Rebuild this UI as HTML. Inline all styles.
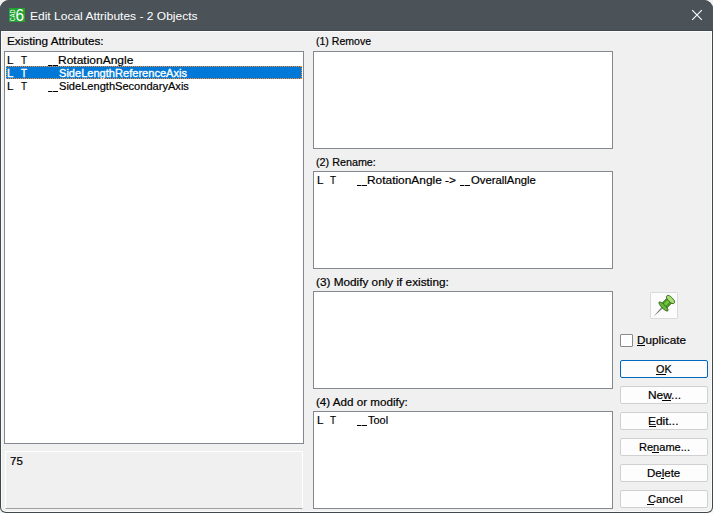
<!DOCTYPE html>
<html><head><meta charset="utf-8">
<style>
html,body{margin:0;padding:0;}
body{width:713px;height:513px;position:relative;overflow:hidden;background:#f2f2f2;font-family:"Liberation Sans",sans-serif;font-size:12px;color:#000;}
.t{position:absolute;white-space:pre;line-height:13px;font-size:11.5px;transform-origin:0 0;}
.r{position:absolute;box-sizing:border-box;}
</style></head><body>
<div class="r" style="left:0px;top:0px;width:713px;height:513px;background:#3f484d;border-radius:9px 9px 6px 6px;"></div>
<div class="r" style="left:1px;top:1px;width:711px;height:511px;background:#fbfbfb;border-radius:8px 8px 5px 5px;"></div>
<div class="r" style="left:0px;top:0px;width:713px;height:30px;background:#4b5359;border-radius:9px 9px 0 0;"></div>
<div class="r" style="left:0px;top:30px;width:713px;height:1px;background:#40494e;"></div>
<div class="r" style="left:2px;top:32px;width:709px;height:479px;background:#f0f0f0;border-radius:0 0 4px 4px;"></div>
<div class="r" style="left:9px;top:8px;width:16px;height:14px;background:#1fa32e;"></div>
<svg class="r" style="left:9px;top:8px" width="16" height="14" viewBox="0 0 16 14"><text x="0" y="0" transform="translate(5.9,13.2) rotate(-90)" font-family="Liberation Sans" font-size="6.6" textLength="11.6" lengthAdjust="spacingAndGlyphs" fill="#fff">CAD</text><text x="0" y="0" transform="translate(6.4,13.1) scale(0.9,1)" font-family="Liberation Sans" font-size="17" fill="#fff">6</text></svg>
<div class="t" style="left:29.96px;top:10px;color:#ffffff;transform:scaleX(1.0440);">Edit Local Attributes - 2 Objects</div>
<svg class="r" style="left:691px;top:9px" width="13" height="13" viewBox="0 0 13 13"><path d="M1.2 1.2L10.8 10.8M10.8 1.2L1.2 10.8" stroke="#fff" stroke-width="1.1"/></svg>
<div class="t" style="left:6.98px;top:35px;-webkit-text-stroke:0.2px currentColor;transform:scaleX(1.0215);">Existing Attributes:</div>
<div class="r" style="left:4px;top:51px;width:300px;height:393px;background:#fff;border:1px solid #828790;"></div>
<div class="t" style="left:7.00px;top:54px;-webkit-text-stroke:0.2px currentColor;">L</div>
<div class="t" style="left:21.00px;top:54px;-webkit-text-stroke:0.2px currentColor;transform:scaleX(0.8571);">T</div>
<div class="t" style="left:57.96px;top:54px;-webkit-text-stroke:0.2px currentColor;transform:scaleX(1.0423);">RotationAngle</div>
<div class="r" style="left:48px;top:65px;width:4px;height:1px;background:#000"></div>
<div class="r" style="left:52px;top:65px;width:1px;height:1px;background:#8a8a8a"></div>
<div class="r" style="left:53px;top:65px;width:5px;height:1px;background:#000"></div>
<div class="r" style="left:6px;top:66px;width:296px;height:13px;background:#0078d7;"></div>
<div class="t" style="left:7.00px;top:67px;color:#ffffff;-webkit-text-stroke:0.35px currentColor;">L</div>
<div class="t" style="left:21.00px;top:67px;color:#ffffff;-webkit-text-stroke:0.35px currentColor;transform:scaleX(0.8571);">T</div>
<div class="t" style="left:59.00px;top:67px;color:#ffffff;-webkit-text-stroke:0.35px currentColor;transform:scaleX(0.9624);">SideLengthReferenceAxis</div>
<div class="r" style="left:48px;top:78px;width:10px;height:1px;background:repeating-linear-gradient(90deg,#000 0 1px,transparent 1px 2px)"></div>
<div class="t" style="left:7.00px;top:80px;-webkit-text-stroke:0.2px currentColor;">L</div>
<div class="t" style="left:21.00px;top:80px;-webkit-text-stroke:0.2px currentColor;transform:scaleX(0.8571);">T</div>
<div class="t" style="left:59.00px;top:80px;-webkit-text-stroke:0.2px currentColor;transform:scaleX(0.9630);">SideLengthSecondaryAxis</div>
<div class="r" style="left:48px;top:91px;width:4px;height:1px;background:#000"></div>
<div class="r" style="left:52px;top:91px;width:1px;height:1px;background:#8a8a8a"></div>
<div class="r" style="left:53px;top:91px;width:5px;height:1px;background:#000"></div>
<div class="r" style="left:6px;top:66px;width:296px;height:1px;background:repeating-linear-gradient(90deg,#ff8a28 0 1px,transparent 1px 2px)"></div>
<div class="r" style="left:6px;top:78px;width:296px;height:1px;background:repeating-linear-gradient(90deg,#ff8a28 0 1px,transparent 1px 2px)"></div>
<div class="r" style="left:6px;top:66px;width:1px;height:13px;background:repeating-linear-gradient(180deg,#ff8a28 0 1px,transparent 1px 2px)"></div>
<div class="r" style="left:301px;top:66px;width:1px;height:13px;background:repeating-linear-gradient(180deg,#ff8a28 0 1px,transparent 1px 2px)"></div>
<div class="r" style="left:5px;top:451px;width:298px;height:58px;border-top:1px solid #fff;border-left:1px solid #fff;border-right:1px solid #fff;border-bottom:1px solid #a0a0a0;"></div>
<div class="t" style="left:10.00px;top:455px;-webkit-text-stroke:0.2px currentColor;">75</div>
<div class="t" style="left:316.00px;top:35px;-webkit-text-stroke:0.2px currentColor;transform:scaleX(0.9167);">(1) Remove</div>
<div class="r" style="left:313px;top:51px;width:300px;height:98px;background:#fff;border:1px solid #828790;"></div>
<div class="t" style="left:316.00px;top:156px;-webkit-text-stroke:0.2px currentColor;transform:scaleX(0.9365);">(2) Rename:</div>
<div class="r" style="left:313px;top:171px;width:300px;height:98px;background:#fff;border:1px solid #828790;"></div>
<div class="t" style="left:316.00px;top:276px;-webkit-text-stroke:0.2px currentColor;transform:scaleX(1.0233);">(3) Modify only if existing:</div>
<div class="r" style="left:313px;top:291px;width:300px;height:98px;background:#fff;border:1px solid #828790;"></div>
<div class="t" style="left:316.00px;top:396px;-webkit-text-stroke:0.2px currentColor;transform:scaleX(1.0111);">(4) Add or modify:</div>
<div class="r" style="left:313px;top:411px;width:300px;height:98px;background:#fff;border:1px solid #828790;"></div>
<div class="t" style="left:317.00px;top:174px;-webkit-text-stroke:0.2px currentColor;">L</div>
<div class="t" style="left:330.00px;top:174px;-webkit-text-stroke:0.2px currentColor;transform:scaleX(0.8571);">T</div>
<div class="r" style="left:357px;top:185px;width:4px;height:1px;background:#000"></div>
<div class="r" style="left:361px;top:185px;width:1px;height:1px;background:#8a8a8a"></div>
<div class="r" style="left:362px;top:185px;width:5px;height:1px;background:#000"></div>
<div class="t" style="left:366.96px;top:174px;-webkit-text-stroke:0.2px currentColor;transform:scaleX(1.0353);">RotationAngle -&gt;</div>
<div class="r" style="left:460px;top:185px;width:4px;height:1px;background:#000"></div>
<div class="r" style="left:464px;top:185px;width:1px;height:1px;background:#8a8a8a"></div>
<div class="r" style="left:465px;top:185px;width:5px;height:1px;background:#000"></div>
<div class="t" style="left:471.00px;top:174px;-webkit-text-stroke:0.2px currentColor;transform:scaleX(0.9848);">OverallAngle</div>
<div class="t" style="left:317.00px;top:414px;-webkit-text-stroke:0.2px currentColor;">L</div>
<div class="t" style="left:330.00px;top:414px;-webkit-text-stroke:0.2px currentColor;transform:scaleX(0.8571);">T</div>
<div class="r" style="left:357px;top:425px;width:4px;height:1px;background:#000"></div>
<div class="r" style="left:361px;top:425px;width:1px;height:1px;background:#8a8a8a"></div>
<div class="r" style="left:362px;top:425px;width:5px;height:1px;background:#000"></div>
<div class="t" style="left:368.00px;top:414px;-webkit-text-stroke:0.2px currentColor;transform:scaleX(0.9524);">Tool</div>
<div class="r" style="left:650px;top:292px;width:28px;height:27px;background:#fcfcfc;border:1px solid #dadada;border-radius:1px;"></div>
<svg class="r" style="left:650px;top:292px" width="28" height="27" viewBox="0 0 28 27">
<g transform="translate(20.5,7.5) rotate(45)">
<path d="M-0.9 10.5 L0.9 10.5 L0.15 23 L-0.15 23 Z" fill="#5a5a5a"/>
<path d="M-0.3 11 L0.3 11 L0 20 Z" fill="#b0b0b0"/>
<rect x="-3.4" y="0" width="6.8" height="9.9" fill="#4c9e25" stroke="#2a5c10" stroke-width="0.7"/>
<rect x="-1.6" y="2" width="2.6" height="6.5" fill="#76c443"/>
<ellipse cx="0" cy="9.9" rx="6.2" ry="1.9" fill="#66b838" stroke="#2a5c10" stroke-width="0.8"/>
<ellipse cx="0" cy="0" rx="5.2" ry="2.3" fill="#a6dc72" stroke="#2a5c10" stroke-width="0.8"/>
</g></svg>
<div class="r" style="left:620px;top:334px;width:13px;height:13px;background:#fff;border:1px solid #8a8a8a;border-radius:1px;"></div>
<div class="t" style="left:636.98px;top:334px;-webkit-text-stroke:0.2px currentColor;transform:scaleX(1.0213);">Duplicate</div>
<div class="r" style="left:637px;top:345px;width:8px;height:1px;background:#000"></div>
<div class="r" style="left:620px;top:360px;width:88px;height:18px;background:#fdfdfd;border:1px solid #0067c0;border-radius:2px;"></div>
<div class="t" style="left:656.00px;top:363px;-webkit-text-stroke:0.2px currentColor;transform:scaleX(0.9412);">OK</div>
<div class="r" style="left:656px;top:374px;width:10px;height:1px;background:#000"></div>
<div class="r" style="left:620px;top:386px;width:88px;height:18px;background:#fdfdfd;border:1px solid #d0d0d0;border-radius:2px;"></div>
<div class="t" style="left:647.97px;top:389px;-webkit-text-stroke:0.2px currentColor;transform:scaleX(1.0333);">New...</div>
<div class="r" style="left:662px;top:400px;width:9px;height:1px;background:#000"></div>
<div class="r" style="left:620px;top:412px;width:88px;height:18px;background:#fdfdfd;border:1px solid #d0d0d0;border-radius:2px;"></div>
<div class="t" style="left:647.96px;top:415px;-webkit-text-stroke:0.2px currentColor;transform:scaleX(1.0357);">Edit...</div>
<div class="r" style="left:649px;top:426px;width:7px;height:1px;background:#000"></div>
<div class="r" style="left:620px;top:438px;width:88px;height:18px;background:#fdfdfd;border:1px solid #d0d0d0;border-radius:2px;"></div>
<div class="t" style="left:639.04px;top:441px;-webkit-text-stroke:0.2px currentColor;transform:scaleX(0.9608);">Rename...</div>
<div class="r" style="left:652px;top:452px;width:7px;height:1px;background:#000"></div>
<div class="r" style="left:620px;top:464px;width:88px;height:18px;background:#fdfdfd;border:1px solid #d0d0d0;border-radius:2px;"></div>
<div class="t" style="left:647.00px;top:467px;-webkit-text-stroke:0.2px currentColor;">Delete</div>
<div class="r" style="left:661px;top:478px;width:3px;height:1px;background:#000"></div>
<div class="r" style="left:620px;top:490px;width:88px;height:18px;background:#fdfdfd;border:1px solid #d0d0d0;border-radius:2px;"></div>
<div class="t" style="left:648.00px;top:493px;-webkit-text-stroke:0.2px currentColor;transform:scaleX(0.9714);">Cancel</div>
<div class="r" style="left:647px;top:504px;width:7px;height:1px;background:#000"></div>
</body></html>
